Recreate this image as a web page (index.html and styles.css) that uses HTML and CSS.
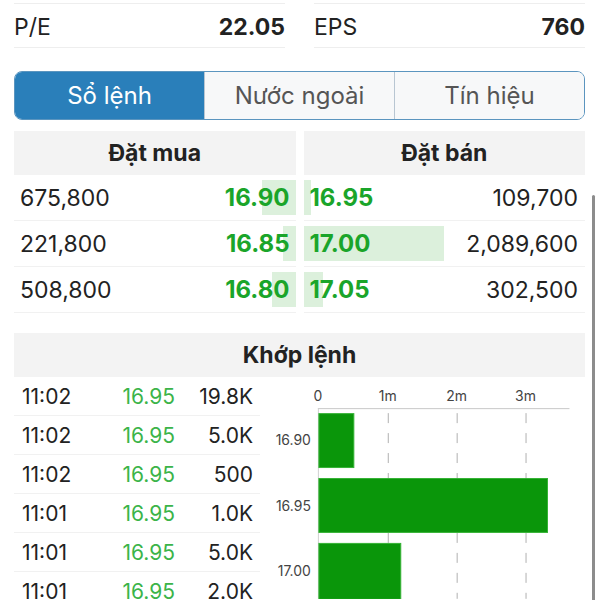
FILE: index.html
```html
<!DOCTYPE html>
<html lang="vi">
<head>
<meta charset="utf-8">
<title>Sổ lệnh</title>
<link rel="stylesheet" href="styles.css">
</head>
<body>
<div class="page">

<div class="stats">
  <div class="stat"><span class="stat-label">P/E</span><span class="stat-val">22.05</span></div>
  <div class="stat"><span class="stat-label">EPS</span><span class="stat-val">760</span></div>
</div>

<div class="tabs">
  <div class="tab active">Sổ lệnh</div>
  <div class="tab">Nước ngoài</div>
  <div class="tab">Tín hiệu</div>
</div>

<div class="book">
  <div class="side buy">
    <div class="head">Đặt mua</div>
    <div class="row"><span class="qty">675,800</span><span class="price"><i class="bar" style="width:34px"></i>16.90</span></div>
    <div class="row"><span class="qty">221,800</span><span class="price"><i class="bar" style="width:13px"></i>16.85</span></div>
    <div class="row"><span class="qty">508,800</span><span class="price"><i class="bar" style="width:24px"></i>16.80</span></div>
  </div>
  <div class="side sell">
    <div class="head">Đặt bán</div>
    <div class="row"><span class="price"><i class="bar" style="width:7px"></i>16.95</span><span class="qty">109,700</span></div>
    <div class="row"><span class="price"><i class="bar" style="width:140px"></i>17.00</span><span class="qty">2,089,600</span></div>
    <div class="row"><span class="price"><i class="bar" style="width:19px"></i>17.05</span><span class="qty">302,500</span></div>
  </div>
</div>

<div class="match">
  <div class="head">Khớp lệnh</div>
  <div class="match-body">
    <div class="trades">
      <div class="trade"><span class="t-time">11:02</span><span class="t-price">16.95</span><span class="t-vol">19.8K</span></div>
      <div class="trade"><span class="t-time">11:02</span><span class="t-price">16.95</span><span class="t-vol">5.0K</span></div>
      <div class="trade"><span class="t-time">11:02</span><span class="t-price">16.95</span><span class="t-vol">500</span></div>
      <div class="trade"><span class="t-time">11:01</span><span class="t-price">16.95</span><span class="t-vol">1.0K</span></div>
      <div class="trade"><span class="t-time">11:01</span><span class="t-price">16.95</span><span class="t-vol">5.0K</span></div>
      <div class="trade"><span class="t-time">11:01</span><span class="t-price">16.95</span><span class="t-vol">2.0K</span></div>
    </div>
    <svg class="chart" width="324" height="222" viewBox="0 0 324 222">
      <g class="ax">
        <text x="56" y="24" text-anchor="middle">0</text>
        <text x="126" y="24" text-anchor="middle">1m</text>
        <text x="195" y="24" text-anchor="middle">2m</text>
        <text x="264" y="24" text-anchor="middle">3m</text>
      </g>
      <line x1="56" y1="31.5" x2="308" y2="31.5" stroke="#c8c8c8" stroke-width="1"/>
      <line x1="56.5" y1="31" x2="56.5" y2="222" stroke="#d0d0d0" stroke-width="1"/>
      <g stroke="#b0b0b0" stroke-width="1" stroke-dasharray="10 10">
        <line x1="126.5" y1="36" x2="126.5" y2="222"/>
        <line x1="195.5" y1="36" x2="195.5" y2="222"/>
        <line x1="264.5" y1="36" x2="264.5" y2="222"/>
      </g>
      <g fill="#0a960a" stroke="#35b335" stroke-width="1">
        <rect x="57" y="36.5" width="35" height="54"/>
        <rect x="57" y="101.5" width="229" height="54"/>
        <rect x="57" y="166.5" width="82" height="56"/>
      </g>
      <g class="ax">
        <text x="49" y="68" text-anchor="end">16.90</text>
        <text x="49" y="134" text-anchor="end">16.95</text>
        <text x="49" y="199" text-anchor="end">17.00</text>
      </g>
    </svg>
  </div>
</div>

<div class="scrollbar"></div>
</div>
</body>
</html>
```

FILE: styles.css
```css
/* order book screen */

body
{ margin: 0;
background: #fff;
color: #222;
font-family: Inter, "Liberation Sans", sans-serif;
}

.page
{ position: relative;
width: 600px;
height: 600px;
overflow: hidden;
padding: 3px 15px 0 14px;
box-sizing: border-box;
}

/* P/E, EPS */

.stats
{ display: flex;
gap: 29px;
}

.stat
{ flex: 1;
display: flex;
justify-content: space-between;
align-items: center;
height: 45px;
padding-top: 2px;
border-top: 1px solid #eeeeee;
border-bottom: 1px solid #eeeeee;
box-sizing: border-box;
font-size: 23px;
}

.stat-val
{ font-weight: 700;
}

/* segmented control */

.tabs
{ display: flex;
margin-top: 23px;
height: 49px;
border: 1.5px solid #5b95bf;
border-radius: 8px;
overflow: hidden;
box-sizing: border-box;
}

.tab
{ flex: 1;
display: flex;
align-items: center;
justify-content: center;
background: #f7f8f9;
color: #555;
font-size: 24px;
border-left: 1px solid #b8c6d2;
}

.tab.active
{ background: #2a7fba;
color: #fff;
border-left: 0;
}

/* order book */

.book
{ display: flex;
gap: 8px;
margin-top: 11px;
}

.side
{ flex: 1;
}

.head
{ height: 44px;
background: #f3f3f3;
display: flex;
align-items: center;
justify-content: center;
font-size: 23px;
font-weight: 700;
}

.row
{ display: flex;
justify-content: space-between;
align-items: center;
height: 46px;
border-bottom: 1px solid #f1f1f1;
box-sizing: border-box;
font-size: 23px;
}

.qty
{ padding: 0 7px 0 6px;
}

.price
{ position: relative;
align-self: stretch;
display: flex;
align-items: center;
padding: 0 6px;
color: #1aa52a;
font-weight: 700;
font-size: 24px;
}

.bar
{ position: absolute;
top: 5px;
bottom: 5px;
background: #dcf0dc;
z-index: -1;
}

.buy .bar
{ right: 0;
}

.sell .bar
{ left: 0;
}

/* matched orders */

.match
{ margin-top: 20px;
}

.match-body
{ display: flex;
}

.trades
{ width: 246px;
}

.trade
{ display: flex;
align-items: center;
height: 39px;
border-bottom: 1px solid #f1f1f1;
box-sizing: border-box;
font-size: 21px;
}

.t-time
{ width: 62px;
padding-left: 8px;
}

.t-price
{ width: 91px;
text-align: right;
color: #3bb449;
}

.t-vol
{ width: 78px;
text-align: right;
}

.chart
{ display: block;
margin-left: 2px;
}

.ax text
{ font-size: 14px;
fill: #444;
font-family: Inter, "Liberation Sans", sans-serif;
}

.scrollbar
{ position: absolute;
left: 592px;
top: 195px;
width: 3px;
height: 420px;
background: #8c8c8c;
border-radius: 2px;
}
```
